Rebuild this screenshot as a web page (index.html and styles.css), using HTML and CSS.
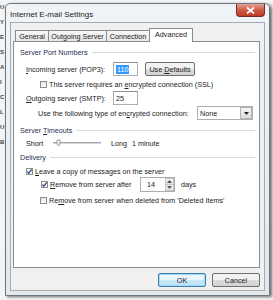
FILE: index.html
```html
<!DOCTYPE html>
<html lang="en">
<head>
  <meta charset="UTF-8" />
  <title>Internet E-mail Settings</title>
  <link rel="stylesheet" href="styles.css">
</head>
<body>
  <div class="behind">
    <span>U</span><span>Y</span><span>E</span><span>S</span><span>A</span>
    <span>I</span><span>C</span><span>L</span><span>U</span><span>B</span>
  </div>

  <div class="window">
    <div class="titlebar">
      <span class="title">Internet E-mail Settings</span>
      <span class="close">
        <svg width="9" height="7" viewBox="0 0 9 7"><path d="M1 0.5 L8 6.5 M8 0.5 L1 6.5" stroke="#fff" stroke-width="1.8"/></svg>
      </span>
    </div>

    <div class="client">
      <div class="tabs">
        <div class="tab t-general">General</div>
        <div class="tab t-outgoing">Outgoing Server</div>
        <div class="tab t-conn">Connection</div>
        <div class="tab active">Advanced</div>
      </div>

      <div class="panel">
        <div class="group first"><span>Server Port Numbers</span></div>

        <div class="row r-incoming">
          <span class="label"><u>I</u>ncoming server (POP3):</span>
          <span class="field"><span class="sel">110</span></span>
          <span class="btn small"><span>Use <u>D</u>efaults</span></span>
        </div>

        <div class="row r-ssl">
          <span class="check"></span>
          <span>This server requires an <u>e</u>ncrypted connection (SSL)</span>
        </div>

        <div class="row r-outgoing">
          <span class="label"><u>O</u>utgoing server (SMTP):</span>
          <span class="field">25</span>
        </div>

        <div class="row r-enc">
          <span class="enc-label">Use the following type of en<u>c</u>rypted connection:</span>
          <span class="combo">
            <span class="combo-text">None</span>
            <span class="combo-arrow">
              <svg width="5" height="3" viewBox="0 0 5 3"><path d="M0 0 H5 L2.5 3 Z" fill="#222"/></svg>
            </span>
          </span>
        </div>

        <div class="group g-timeouts"><span>Server <u>T</u>imeouts</span></div>

        <div class="row r-slider">
          <span class="short">Short</span>
          <span class="track">
            <svg width="48" height="8" viewBox="0 0 48 8">
              <rect x="0" y="3" width="48" height="2" fill="#d6d6d6"/>
              <line x1="0" y1="3.5" x2="48" y2="3.5" stroke="#a8a8a8" stroke-width="1"/>
              <path d="M4 1 H7 V5 L5.5 7 L4 5 Z" fill="#f4f4f4" stroke="#8a8a8a" stroke-width="0.8"/>
            </svg>
          </span>
          <span class="long">Long</span>
          <span>1 minute</span>
        </div>

        <div class="group g-delivery"><span>Delivery</span></div>

        <div class="row r-leave">
          <span class="check on">
            <svg width="7" height="7" viewBox="0 0 7 7"><path d="M1.3 3.6 L2.8 5.2 L5.8 1.4" stroke="#3a4f86" stroke-width="1.3" fill="none"/></svg>
          </span>
          <span><u>L</u>eave a copy of messages on the server</span>
        </div>

        <div class="row r-after">
          <span class="check on">
            <svg width="7" height="7" viewBox="0 0 7 7"><path d="M1.3 3.6 L2.8 5.2 L5.8 1.4" stroke="#3a4f86" stroke-width="1.3" fill="none"/></svg>
          </span>
          <span class="after-label"><u>R</u>emove from server after</span>
          <span class="spin">
            <span class="spin-text">14</span>
            <span class="spin-btns">
              <span class="spin-up"><svg width="5" height="3" viewBox="0 0 5 3"><path d="M0 3 H5 L2.5 0 Z" fill="#555"/></svg></span>
              <span class="spin-down"><svg width="5" height="3" viewBox="0 0 5 3"><path d="M0 0 H5 L2.5 3 Z" fill="#555"/></svg></span>
            </span>
          </span>
          <span class="days">days</span>
        </div>

        <div class="row r-deleted">
          <span class="check"></span>
          <span>Re<u>m</u>ove from server when deleted from 'Deleted Items'</span>
        </div>
      </div>

      <div class="actions">
        <span class="btn big default">OK</span>
        <span class="btn big">Cancel</span>
      </div>
    </div>
  </div>
</body>
</html>
```

FILE: styles.css
```css
body {
  margin: 0;
  width: 273px;
  height: 300px;
  overflow: hidden;
  background: #f4f4f4;
  font-family: "Liberation Sans", Arial, sans-serif;
  color: #222;
  position: relative;
}
u {
  text-decoration-thickness: 1px;
  text-underline-offset: 1px;
}

/* the window underneath, only its edge shows */
.behind {
  position: absolute;
  left: 0;
  top: 4px;
  width: 5px;
  display: flex;
  flex-direction: column;
  gap: 8px;
  font-size: 6px;
  font-weight: bold;
  color: #444;
  line-height: 7px;
}

.window {
  position: relative;
  margin: 3px 0 0 5px;
  width: 263px;
  height: 291px;
  border: 1px solid #6c7681;
  border-radius: 5px 5px 0 0;
  background: linear-gradient(#f1f4f7, #e3e8ed);
  box-shadow: 2px 1px 3px rgba(0, 0, 0, 0.55);
  display: flex;
  flex-direction: column;
}

.titlebar {
  height: 18px;
  display: flex;
  align-items: flex-start;
  justify-content: space-between;
}
.title {
  margin: 6px 0 0 4px;
  font-size: 8px;
  color: #1b1b1b;
}
.close {
  width: 29px;
  height: 13px;
  margin-right: 4px;
  border: 1px solid #7b2b26;
  border-top: none;
  border-radius: 0 0 4px 4px;
  background: linear-gradient(#e4a596, #cf5a47 50%, #c03a26);
  display: flex;
  align-items: center;
  justify-content: center;
  box-sizing: border-box;
}

.client {
  flex: 1;
  margin: 0 4px 4px 4px;
  border: 1px solid #a3acb6;
  background: #f0f0f0;
  padding: 0 4px 3px 2px;
  display: flex;
  flex-direction: column;
  font-size: 7.2px;
}

.tabs {
  display: flex;
  align-items: flex-end;
  height: 13px;
  padding: 5px 0 0 2px;
  position: relative;
  z-index: 1;
}
.tab {
  height: 11px;
  box-sizing: border-box;
  border: 1px solid #898c95;
  border-bottom: none;
  border-left: none;
  background: linear-gradient(#f7f7f7, #e6e6e6);
  display: flex;
  align-items: center;
  justify-content: center;
}
.t-general { width: 34px; border-left: 1px solid #898c95; }
.t-outgoing { width: 58px; }
.t-conn { width: 43px; }
.tab.active {
  width: 44px;
  height: 14px;
  margin-bottom: -1px;
  background: #fff;
  padding-bottom: 2px;
  margin-left: -1px;
  border-left: 1px solid #898c95;
}

.panel {
  height: 225px;
  background: #fff;
  border: 1px solid #898c95;
  padding: 0 4px 0 6px;
  display: flex;
  flex-direction: column;
}

.group {
  height: 10px;
  display: flex;
  align-items: center;
  color: #1e3050;
}
.group::after {
  content: "";
  flex: 1;
  height: 1px;
  margin-left: 4px;
  background: #d5dbe2;
}
.group.first { margin-top: 5px; }
.g-timeouts { margin-top: 5px; }
.g-delivery { margin-top: 4px; }

.row {
  display: flex;
  align-items: center;
}
.r-incoming { height: 14px; margin-top: 5px; padding-left: 6px; }
.r-ssl { height: 10px; margin-top: 3px; padding-left: 20px; }
.r-outgoing { height: 14px; margin-top: 2px; padding-left: 6px; }
.r-enc { height: 14px; margin-top: 1px; padding-left: 18px; }
.r-slider { height: 10px; margin-top: 3px; padding-left: 6px; }
.r-leave { height: 10px; margin-top: 4px; padding-left: 6px; }
.r-after { height: 15px; margin-top: 1px; padding-left: 21px; }
.r-deleted { height: 10px; margin-top: 3px; padding-left: 20px; }

.label { width: 87px; }

.field {
  width: 25px;
  height: 14px;
  box-sizing: border-box;
  border: 1px solid #abadb3;
  border-top-color: #8e9096;
  display: flex;
  align-items: center;
  padding-left: 2px;
}
.sel {
  background: #3399ff;
  color: #fff;
  padding: 0 1px;
  line-height: 9px;
}

.btn {
  box-sizing: border-box;
  border: 1px solid #707070;
  border-radius: 2px;
  background: linear-gradient(#f2f2f2 50%, #dcdcdc 50%, #d2d2d2);
  display: flex;
  align-items: center;
  justify-content: center;
}
.btn.small {
  width: 50px;
  height: 14px;
  margin-left: 7px;
}

.check {
  width: 7px;
  height: 7px;
  box-sizing: border-box;
  border: 1px solid #8f8f8f;
  background: linear-gradient(#e8e8e8, #fafafa);
  margin-right: 2px;
  display: flex;
}
.check.on {
  background: #f4f6f9;
}
.check svg {
  margin: -1px;
}

.enc-label { width: 159px; }
.combo {
  width: 56px;
  height: 14px;
  box-sizing: border-box;
  border: 1px solid #abadb3;
  display: flex;
  align-items: stretch;
}
.combo-text {
  flex: 1;
  display: flex;
  align-items: center;
  padding-left: 2px;
}
.combo-arrow {
  width: 10px;
  border: 1px solid #b5b5b5;
  background: linear-gradient(#f3f3f3, #dedede);
  display: flex;
  align-items: center;
  justify-content: center;
}

.short { width: 27px; }
.track { width: 48px; height: 8px; display: flex; }
.long { margin: 0 5px 0 10px; }

.after-label { width: 90px; }
.spin {
  width: 35px;
  height: 15px;
  box-sizing: border-box;
  border: 1px solid #abadb3;
  display: flex;
}
.spin-text {
  flex: 1;
  display: flex;
  align-items: center;
  padding-left: 6px;
}
.spin-btns {
  width: 9px;
  display: flex;
  flex-direction: column;
}
.spin-up, .spin-down {
  flex: 1;
  border: 1px solid #c3c3c3;
  background: linear-gradient(#f6f6f6, #e4e4e4);
  display: flex;
  align-items: center;
  justify-content: center;
}
.spin-up { border-bottom: none; }
.days { margin-left: 6px; }

.actions {
  display: flex;
  justify-content: flex-end;
  gap: 6px;
  margin-top: 5px;
}
.btn.big {
  width: 48px;
  height: 14px;
}
.btn.default {
  border-color: #3c7fb1;
  background: linear-gradient(#eaf6fd 50%, #c7e6f7 50%, #bee3f6);
  box-shadow: inset 0 0 0 1px #a7d9f5;
}
```
